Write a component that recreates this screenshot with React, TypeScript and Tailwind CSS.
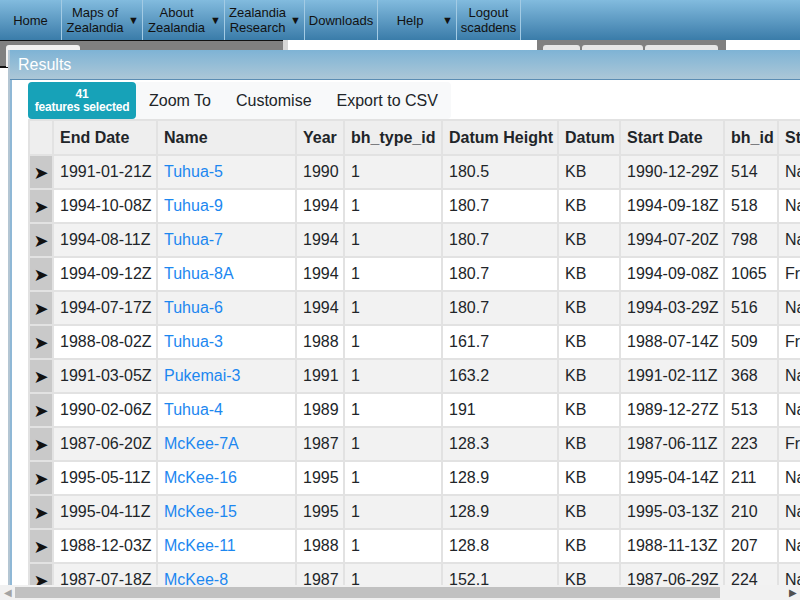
import React from 'react'

const navItems = [
  { label: ['Home'], w: 'w-[62px]', arrow: false },
  { label: ['Maps of', 'Zealandia'], w: 'w-[81px]', arrow: true },
  { label: ['About', 'Zealandia'], w: 'w-[82px]', arrow: true },
  { label: ['Zealandia', 'Research'], w: 'w-[80px]', arrow: true },
  { label: ['Downloads'], w: 'w-[73px]', arrow: false },
  { label: ['Help'], w: 'w-[79px]', arrow: true },
  { label: ['Logout', 'scaddens'], w: 'w-[64px]', arrow: false },
]

const columns = [
  { key: 'end', title: 'End Date', w: 'w-[104px]' },
  { key: 'name', title: 'Name', w: 'w-[139px]' },
  { key: 'year', title: 'Year', w: 'w-[48px]' },
  { key: 'type', title: 'bh_type_id', w: 'w-[98px]' },
  { key: 'height', title: 'Datum Height', w: 'w-[116px]' },
  { key: 'datum', title: 'Datum', w: 'w-[62px]' },
  { key: 'start', title: 'Start Date', w: 'w-[104px]' },
  { key: 'id', title: 'bh_id', w: 'w-[54px]' },
  { key: 'status', title: 'Status', w: 'w-[100px]' },
]

type Row = Record<string, string>

const rows: Row[] = [
  ['1991-01-21Z', 'Tuhua-5', '1990', '180.5', '1990-12-29Z', '514', 'Na'],
  ['1994-10-08Z', 'Tuhua-9', '1994', '180.7', '1994-09-18Z', '518', 'Na'],
  ['1994-08-11Z', 'Tuhua-7', '1994', '180.7', '1994-07-20Z', '798', 'Na'],
  ['1994-09-12Z', 'Tuhua-8A', '1994', '180.7', '1994-09-08Z', '1065', 'Fr'],
  ['1994-07-17Z', 'Tuhua-6', '1994', '180.7', '1994-03-29Z', '516', 'Na'],
  ['1988-08-02Z', 'Tuhua-3', '1988', '161.7', '1988-07-14Z', '509', 'Fr'],
  ['1991-03-05Z', 'Pukemai-3', '1991', '163.2', '1991-02-11Z', '368', 'Na'],
  ['1990-02-06Z', 'Tuhua-4', '1989', '191', '1989-12-27Z', '513', 'Na'],
  ['1987-06-20Z', 'McKee-7A', '1987', '128.3', '1987-06-11Z', '223', 'Fr'],
  ['1995-05-11Z', 'McKee-16', '1995', '128.9', '1995-04-14Z', '211', 'Na'],
  ['1995-04-11Z', 'McKee-15', '1995', '128.9', '1995-03-13Z', '210', 'Na'],
  ['1988-12-03Z', 'McKee-11', '1988', '128.8', '1988-11-13Z', '207', 'Na'],
  ['1987-07-18Z', 'McKee-8', '1987', '152.1', '1987-06-29Z', '224', 'Na'],
].map(([end, name, year, height, start, id, status]) => ({
  end, name, year, type: '1', height, datum: 'KB', start, id, status,
}))

function NavBar() {
  return (
    <div className="flex h-[40px] bg-gradient-to-b from-[#82bbde] to-[#3a7ca9] text-[13px] leading-[15px] text-[#111]">
      {navItems.map((item, i) => (
        <div key={i} className={`${item.w} flex shrink-0 items-center border-r border-[#a3cbe4]`}>
          <div className="flex-1 text-center">
            {item.label.map((l) => (
              <div key={l}>{l}</div>
            ))}
          </div>
          {item.arrow && <span className="pr-[3px] text-[11px]">▼</span>}
        </div>
      ))}
    </div>
  )
}

function BackStrip() {
  return (
    <div className="flex h-[28px]">
      <div className="w-[283px] border-t border-b-2 border-[#111] bg-[#808080] pl-[6px] pt-[4px]">
        <div className="h-[22px] w-[74px] rounded-t-[3px] bg-[#f2f2f2]" />
      </div>
      <div className="w-[5px] bg-[#d6d6d6]" />
      <div className="w-[249px] bg-white" />
      <div className="flex w-[189px] items-end gap-[2px] bg-[#808080] pl-[6px]">
        <div className="h-[23px] w-[37px] rounded-t-[3px] bg-[#e6e6e6]" />
        <div className="h-[23px] w-[61px] rounded-t-[3px] bg-[#e6e6e6]" />
        <div className="h-[23px] w-[73px] rounded-t-[3px] bg-[#e6e6e6]" />
      </div>
      <div className="flex-1 bg-white" />
    </div>
  )
}

function Toolbar() {
  return (
    <div className="flex h-[37px]">
      <div className="flex w-[108px] flex-col items-center justify-center rounded-[4px] bg-[#17a2b8] text-[12px] font-bold leading-[13px] tracking-[-0.2px] text-white">
        <span>41</span>
        <span>features selected</span>
      </div>
      <div className="flex items-center rounded-r-[4px] bg-[#f8f9fa] text-[16px] text-[#212529]">
        <span className="px-[13px]">Zoom To</span>
        <span className="px-[12px]">Customise</span>
        <span className="pl-[13px] pr-[13px]">Export to CSV</span>
      </div>
    </div>
  )
}

function Table() {
  return (
    <div className="w-max border-l-2 border-t-2 border-[#e2e2e2] text-[16px] text-[#212529]">
      <div className="flex h-[35px] bg-[#eeeeee] font-bold">
        <div className="w-[24px] border-r-2 border-b-2 border-[#e2e2e2]" />
        {columns.map((c) => (
          <div key={c.key} className={`${c.w} flex items-center border-r-2 border-b-2 border-[#e2e2e2] pl-[6px] whitespace-nowrap`}>
            {c.title}
          </div>
        ))}
      </div>
      {rows.map((r, i) => (
        <div key={i} className={`flex h-[34px] ${i % 2 === 0 ? 'bg-[#f2f2f2]' : 'bg-white'}`}>
          <div className="flex w-[24px] items-center justify-center border-r-2 border-b-2 border-[#e2e2e2] bg-[#c9c9c9] font-['DejaVu_Sans',sans-serif] text-[18px] text-[#111]">
            ➤
          </div>
          {columns.map((c) => (
            <div
              key={c.key}
              className={`${c.w} flex items-center border-r-2 border-b-2 border-[#e2e2e2] pl-[6px] whitespace-nowrap ${c.key === 'name' ? 'text-[#1c87f0]' : ''}`}
            >
              {r[c.key]}
            </div>
          ))}
        </div>
      ))}
    </div>
  )
}

export default function App() {
  return (
    <div className="relative h-[600px] w-[800px] overflow-hidden bg-white font-['Liberation_Sans',Arial,sans-serif]">
      <NavBar />
      <BackStrip />

      {/* results dialog floats over the map page */}
      <div className="absolute left-[10px] top-[50px] flex h-[560px] w-[820px] flex-col shadow-[-2px_0_0_#b4c6d3]">
        <div className="flex h-[30px] shrink-0 items-center border-b border-[#5b8db3] bg-gradient-to-b from-[#7eb3d5] to-[#abc7d7] pl-[8px] text-[16px] text-white">
          Results
        </div>
        <div className="flex-1 overflow-hidden border-l-2 border-[#8fb8d6] bg-white pl-[16px] pt-[2px]">
          <Toolbar />
          <Table />
        </div>
      </div>

      {/* horizontal scrollbar */}
      <div className="absolute bottom-0 left-0 flex h-[15px] w-full items-center bg-[#f1f1f1]">
        <span className="w-[15px] text-center text-[10px] text-[#a3a3a3]">◀</span>
        <div className="h-[11px] w-[705px] bg-[#c1c1c1]" />
        <div className="flex-1" />
        <span className="w-[15px] text-center text-[10px] text-[#505050]">▶</span>
      </div>
    </div>
  )
}
